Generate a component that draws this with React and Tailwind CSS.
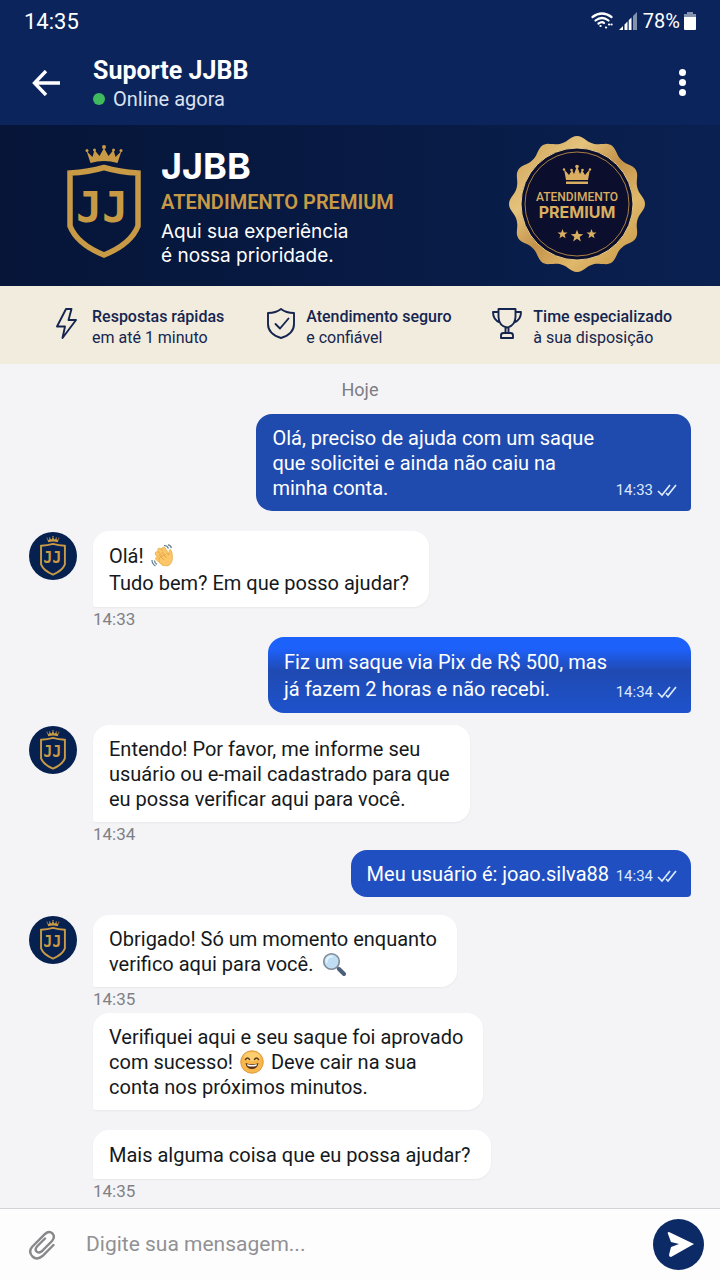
import { useState } from "react";

const messages = [
    { id: 1, from: "me", text: ["Olá, preciso de ajuda com um saque", "que solicitei e ainda não caiu na", "minha conta."], time: "14:33", gap: "mt-3", style: "pr-[97px] leading-[25px] bg-[#1f4aae]" },
    { id: 2, from: "support", avatar: true, text: ["Olá! {wave}", "Tudo bem? Em que posso ajudar?"], time: "14:33", gap: "mt-5", style: "leading-[27px]" },
    { id: 3, from: "me", text: ["Fiz um saque via Pix de R$ 500, mas", "já fazem 2 horas e não recebi."], time: "14:34", gap: "mt-1.5", style: "pr-[84px] leading-[27px] bg-linear-to-b from-[#1d61fb] from-15% via-[#1f4ab2] via-45% to-[#1e52cc]" },
    { id: 4, from: "support", avatar: true, text: ["Entendo! Por favor, me informe seu", "usuário ou e-mail cadastrado para que", "eu possa verificar aqui para você."], time: "14:34", gap: "mt-3", style: "leading-[25px]" },
    { id: 5, from: "me", text: ["Meu usuário é: joao.silva88"], time: "14:34", gap: "mt-1", style: "pr-[82px] leading-[25px] bg-[#1f4fc0]" },
    { id: 6, from: "support", avatar: true, text: ["Obrigado! Só um momento enquanto", "verifico aqui para você. {search}"], time: "14:35", gap: "mt-4.5", style: "leading-[25px]" },
    { id: 7, from: "support", text: ["Verifiquei aqui e seu saque foi aprovado", "com sucesso! {smile} Deve cair na sua", "conta nos próximos minutos."], gap: "mt-0.5", style: "leading-[25px]" },
    { id: 8, from: "support", text: ["Mais alguma coisa que eu possa ajudar?"], time: "14:35", gap: "mt-5", style: "leading-[27px]" },
];

function Crown({ x, y, scale = 1 }) {
    return (
        <g transform={`translate(${x} ${y}) scale(${scale})`}>
            <path d="M1 6 7 12 9 5 14 11 18.500 3 23 11 28 5 30 12 36 6 32 18Q18.500 14 5 18Z" />
            <circle cx="1.500" cy="5.500" r="1.500" />
            <circle cx="9" cy="5" r="1.500" />
            <circle cx="18.500" cy="2" r="2" />
            <circle cx="28" cy="5" r="1.500" />
            <circle cx="35.500" cy="5.500" r="1.500" />
        </g>
    );
}

function Shield({ className }) {
    return (
        <svg viewBox="0 0 74 114" className={className} fill="#c89a45" aria-hidden="true">
            <Crown x="18.500" y="0" />
            <path d="M3 28Q22 27 37 22.500Q52 27 71 28V81Q64 99 37 110Q10 99 3 81Z" fill="none" stroke="#c89a45" strokeWidth="5.500" />
            <text x="35" y="77" textAnchor="middle" fontFamily="DejaVu Sans Mono" fontWeight="700" fontSize="43">JJ</text>
        </svg>
    );
}

// 12 soft points around the seal
const sealPath = () => {
    const pts = [];
    for (let i = 0; i < 180; i++) {
        const a = (i * 2 * Math.PI) / 180;
        const r = 62.5 + 5.5 * Math.pow((1 + Math.cos(12 * a)) / 2, 1.2);
        pts.push(`${(68 + r * Math.sin(a)).toFixed(1)} ${(68 - r * Math.cos(a)).toFixed(1)}`);
    }
    return `M${pts.join("L")}Z`;
};

const star = "M0-5 1.300-1.600 5-1.500 2.100.700 3.100 4.300 0 2.200-3.100 4.300-2.100.700-5-1.500-1.300-1.600Z";

function Seal() {
    return (
        <svg viewBox="0 0 136 136" className="size-34 shrink-0">
            <defs>
                <linearGradient id="gold" x1="0" y1="0" x2="1" y2="1">
                    <stop offset="0" stopColor="#c99b50" />
                    <stop offset=".3" stopColor="#e5c37d" />
                    <stop offset=".5" stopColor="#c3924a" />
                    <stop offset=".7" stopColor="#e0b869" />
                    <stop offset="1" stopColor="#bf8c3f" />
                </linearGradient>
            </defs>
            <path d={sealPath()} fill="url(#gold)" />
            <circle cx="68" cy="68" r="56" fill="#0b0e2c" stroke="#e6c98a" strokeWidth="1" />
            <circle cx="68" cy="68" r="52" fill="none" stroke="#a98045" strokeWidth="1" />
            <g fill="#d9ae61">
                <path d="M55 33 60 39 63 34 65 38 68 30 71 38 73 34 76 39 81 33 79 44H57Z" />
                <path d="M57 45.500H79V48H57Z" />
                <circle cx="68" cy="30.500" r="1.800" />
                <circle cx="62.500" cy="34" r="1.300" />
                <circle cx="73.500" cy="34" r="1.300" />
                <circle cx="55" cy="33.500" r="1.200" />
                <circle cx="81" cy="33.500" r="1.200" />
                <text x="68" y="65" textAnchor="middle" fontFamily="Roboto" fontWeight="500" fontSize="12">ATENDIMENTO</text>
                <text x="68" y="82" textAnchor="middle" fontFamily="Inter" fontWeight="700" fontSize="16">PREMIUM</text>
                <path d={star} transform="translate(53.500 98)" />
                <path d={star} transform="translate(68 100) scale(1.250)" />
                <path d={star} transform="translate(82.500 98)" />
            </g>
        </svg>
    );
}

const emojis = {
    wave: (
        <svg viewBox="0 0 24 24" className="inline-block size-6 align-[-5px] mx-0.5" role="img" aria-label="mão acenando">
            <path d="M6 9.500 13 18M8.500 6 15 14M12.500 5 17 12" stroke="#e9ac4c" strokeWidth="4.400" strokeLinecap="round" />
            <path d="M6 9.500 13 18M8.500 6 15 14M12.500 5 17 12M5.500 14.500 12 20" stroke="#fbc768" strokeWidth="3.200" strokeLinecap="round" />
            <path d="M8 14 16 9.500 18 11Q17.500 5 19.500 5.500 21.500 7 21.500 14 21 21 16 22 11 22 8 18Z" fill="#fbc768" stroke="#e2a342" strokeWidth=".6" />
            <path d="M8 11 13 16M10.500 8 15.500 14" stroke="#dd9a3b" strokeWidth=".7" />
            <path d="M1 16Q1 20 4.500 22M3.500 16.500Q3.500 19 6 20.500M13 1.500Q16.500 1.500 17.500 4.500M17 .800Q19.500 1 20.500 4" fill="none" stroke="#617f91" strokeWidth="1.200" />
        </svg>
    ),
    search: (
        <svg viewBox="0 0 24 24" className="inline-block size-6 align-[-5px] mx-1" role="img" aria-label="lupa">
            <path d="m14.500 14.500 3 3" stroke="#77838e" strokeWidth="2.500" />
            <path d="m17 17 5 5" stroke="#4b5f79" strokeWidth="4" strokeLinecap="round" />
            <circle cx="9.500" cy="9.500" r="7.800" fill="#bfdef4" stroke="#7f8b98" strokeWidth="1.600" />
            <path d="M4.500 10Q4.500 4.500 10 4.500" fill="none" stroke="#e3f3fd" strokeWidth="2" strokeLinecap="round" />
        </svg>
    ),
    smile: (
        <svg viewBox="0 0 24 24" className="inline-block size-6 align-[-5px] mx-0.5" role="img" aria-label="sorriso">
            <circle cx="12" cy="12" r="11.300" fill="#f7b74c" stroke="#dc8d30" strokeWidth=".8" />
            <ellipse cx="12" cy="6.500" rx="8" ry="4.500" fill="#fcce70" />
            <path d="M5.500 9.500Q7.500 6.500 9.500 9.500M14.500 9.500Q16.500 6.500 18.500 9.500" fill="none" stroke="#563619" strokeWidth="1.400" strokeLinecap="round" />
            <path d="M5.500 13Q12 15.500 18.500 13 17.500 19 12 19 6.500 19 5.500 13Z" fill="#593218" />
            <path d="M7 14Q12 15.800 17 14L16.300 16Q12 17.200 7.700 16Z" fill="#fff" />
        </svg>
    ),
};

function Line({ text }) {
    const parts = text.split(/\{(\w+)\}/);
    return (
        <span className="block whitespace-nowrap">
            {parts.map((part, i) => (i % 2 ? <span key={i}>{emojis[part]}</span> : part))}
        </span>
    );
}

function DoubleCheck() {
    return (
        <svg viewBox="0 0 20 14" className="w-5 h-3.5" fill="none" stroke="currentColor" strokeWidth="1.700" aria-label="lida">
            <path d="m1 8 4 4L13 2M9 10l2 2 8-10" />
        </svg>
    );
}

function Message({ msg }) {
    if (msg.from === "me") {
        return (
            <div className={`flex justify-end ${msg.gap}`}>
                <div className={`relative pl-4 pt-3 pb-2.5 rounded-2xl rounded-br-sm text-white text-[20px] ${msg.style}`}>
                    {msg.text.map((line) => <Line key={line} text={line} />)}
                    <span className="absolute right-3.5 bottom-2.5 flex items-center gap-1 text-[15px] leading-[22px] text-blue-100">
                        {msg.time} <DoubleCheck />
                    </span>
                </div>
            </div>
        );
    }

    return (
        <div className={`flex items-start gap-4 ${msg.gap}`}>
            {msg.avatar ? (
                <div className="size-12 mt-px shrink-0 rounded-full bg-[#06204f] flex items-center justify-center">
                    <Shield className="h-10" />
                </div>
            ) : (
                <div className="w-12 shrink-0" />
            )}
            <div>
                <div className={`w-fit pl-4 pr-5 pt-3 pb-2.5 rounded-2xl rounded-bl-xs bg-white text-[#15191c] text-[20px] shadow-xs ${msg.style}`}>
                    {msg.text.map((line) => <Line key={line} text={line} />)}
                </div>
                {msg.time && <p className="text-[17px] leading-6 text-[#808084]">{msg.time}</p>}
            </div>
        </div>
    );
}

function Feature({ title, text, children }) {
    return (
        <div className="flex items-center gap-2.5">
            <svg viewBox="0 0 32 32" className="size-8 shrink-0" fill="none" stroke="currentColor" strokeWidth="1.900" strokeLinejoin="round" strokeLinecap="round">
                {children}
            </svg>
            <div className="pt-1.5 text-[16px] leading-[21px] whitespace-nowrap">
                <p className="font-medium">{title}</p>
                <p>{text}</p>
            </div>
        </div>
    );
}

function App() {
    const [text, setText] = useState("");

    const handleSubmit = (e) => {
        e.preventDefault();
        setText("");
    };

    return (
        <div className="min-h-screen flex flex-col bg-[#f4f4f7] font-['Roboto',sans-serif]">
            <header className="bg-[#0b245c] text-white">
                {/* Status bar */}
                <div className="flex items-center justify-between px-6 h-[42px] text-[20px]">
                    <span className="text-[22px]">14:35</span>
                    <div className="flex items-center gap-1.5">
                        <svg viewBox="0 0 22 20" className="w-[22px] h-5" fill="none" stroke="currentColor" strokeWidth="2.200" strokeLinecap="round">
                            <path d="M1.500 6Q11-1 20.500 6M4.500 9.500Q11 4.500 17.500 9.500M7.500 12.500Q11 10 13 12" />
                            <path d="M9.500 15h.1M15 16.500h.1M18 13.500h.1M20.500 13.500h.1" />
                        </svg>
                        <svg viewBox="0 0 18 18" className="size-4.5" fill="currentColor">
                            <path d="M0 18 4 14V18ZM5.500 12.500 8.500 9.500V18H5.500ZM9.700 8.300 12.500 5.500V18H9.700Z" />
                            <path d="M14 4 18 0V18H14Z" opacity=".5" />
                        </svg>
                        <span>78%</span>
                        <svg viewBox="0 0 12 18" className="w-3 h-4.5 -ml-0.5" fill="currentColor">
                            <path d="M3 0H9V2H12V5H0V2H3Z" opacity=".5" />
                            <path d="M0 5H12V17Q12 18 11 18H1Q0 18 0 17Z" />
                        </svg>
                    </div>
                </div>

                <div className="flex items-center h-[83px] pl-8 pr-6 pb-0.5">
                    <button type="button" aria-label="Voltar" className="w-[61px]">
                        <svg viewBox="0 0 28 26" className="w-7 h-[26px]" fill="none" stroke="currentColor" strokeWidth="3.400">
                            <path d="M14 1 2.500 13 14 25M2 13H28" />
                        </svg>
                    </button>
                    <div className="flex-1 pt-1">
                        <h1 className="text-[25px] leading-7 font-bold">Suporte JJBB</h1>
                        <p className="flex items-center gap-2 text-[20px] leading-7 text-[#dce2ef]">
                            <span className="size-3 rounded-full bg-[#3fba5c]" />
                            Online agora
                        </p>
                    </div>
                    <button type="button" aria-label="Mais opções" className="w-7 flex flex-col items-center gap-[3px]">
                        <span className="size-[7px] rounded-full bg-white" />
                        <span className="size-[7px] rounded-full bg-white" />
                        <span className="size-[7px] rounded-full bg-white" />
                    </button>
                </div>
            </header>

            {/* Premium banner */}
            <section className="h-[161px] flex items-center bg-linear-to-r from-[#061538] to-[#0a2050] pl-[67px] pr-[75px] pb-1 text-white font-['Inter',sans-serif]">
                <Shield className="h-[114px] shrink-0 mb-1" />
                <div className="flex-1 pl-5 pt-2">
                    <h2 className="text-[36px] leading-9 font-bold">JJBB</h2>
                    <p className="text-[20px] leading-9 font-semibold text-[#c99a45] font-['Roboto',sans-serif]">ATENDIMENTO PREMIUM</p>
                    <p className="text-[19px] leading-6">Aqui sua experiência<br />é nossa prioridade.</p>
                </div>
                <Seal />
            </section>

            <section className="h-[78px] flex items-center justify-between pl-[50px] pr-12 pb-0.5 bg-[#f1ecde] text-[#152550]">
                <Feature title="Respostas rápidas" text="em até 1 minuto">
                    <path d="M16 1H21.500L18.500 12H26L12.500 30 15 18.500H7Z" />
                </Feature>
                <Feature title="Atendimento seguro" text="e confiável">
                    <path d="M17 1Q22 5 30 5V16Q30 26 17 30 4 26 4 16V5Q12 5 17 1Z" />
                    <path d="m11.500 16 4.500 4.500 8.500-10" />
                </Feature>
                <Feature title="Time especializado" text="à sua disposição">
                    <path d="M7.500 1H24.500V9Q24 18 16 19.500 8 18 7.500 9ZM7.500 4H2Q2 12 9 14.500M24.500 4H30Q30 12 23 14.500M14.500 19.500V25M17.500 19.500V25M10 30V27.500Q10 25 12.500 25H19.500Q22 25 22 27.500V30Z" />
                </Feature>
            </section>

            <main className="flex-1 px-[29px] pt-[13px] pb-1">
                <p className="text-center text-[18px] leading-[25px] text-[#7d7d82]">Hoje</p>
                {messages.map((msg) => <Message key={msg.id} msg={msg} />)}
            </main>

            <form onSubmit={handleSubmit} className="h-[72px] flex items-center pl-7 pr-4 bg-[#fdfdfe] border-t border-[#d3d3d7]">
                <button type="button" aria-label="Anexar arquivo" className="text-[#88888b]">
                    <svg viewBox="0 0 28 30" className="w-7 h-[30px]" fill="none" stroke="currentColor" strokeWidth="2.400" strokeLinecap="round">
                        <path d="M25.500 15 14.500 26Q9 30.500 4.500 26.500 0 22 4 17L17 4Q21 .500 24.500 3.500 27.500 7 24 11L13.500 21.500Q10.500 23.500 8.500 21.500 6.500 19.500 9 16.500L17 8.500" />
                    </svg>
                </button>
                <input
                    type="text"
                    aria-label="Mensagem"
                    value={text}
                    onChange={(e) => setText(e.target.value)}
                    className="flex-1 min-w-0 ml-[30px] text-[21px] text-gray-800 placeholder:text-[#919194] outline-none"
                    placeholder="Digite sua mensagem..."
                />
                <button type="submit" aria-label="Enviar" className="size-[51px] rounded-full bg-[#0c2a66] flex items-center justify-center">
                    <svg viewBox="0 0 28 26" className="w-7 h-[26px] ml-1" fill="#fff">
                        <path d="M2 0 27 12 4 25Q2 25 2 23L4 15 12 12 4 10 1 2Q0 0 2 0Z" />
                    </svg>
                </button>
            </form>
        </div>
    );
}

export default App;
